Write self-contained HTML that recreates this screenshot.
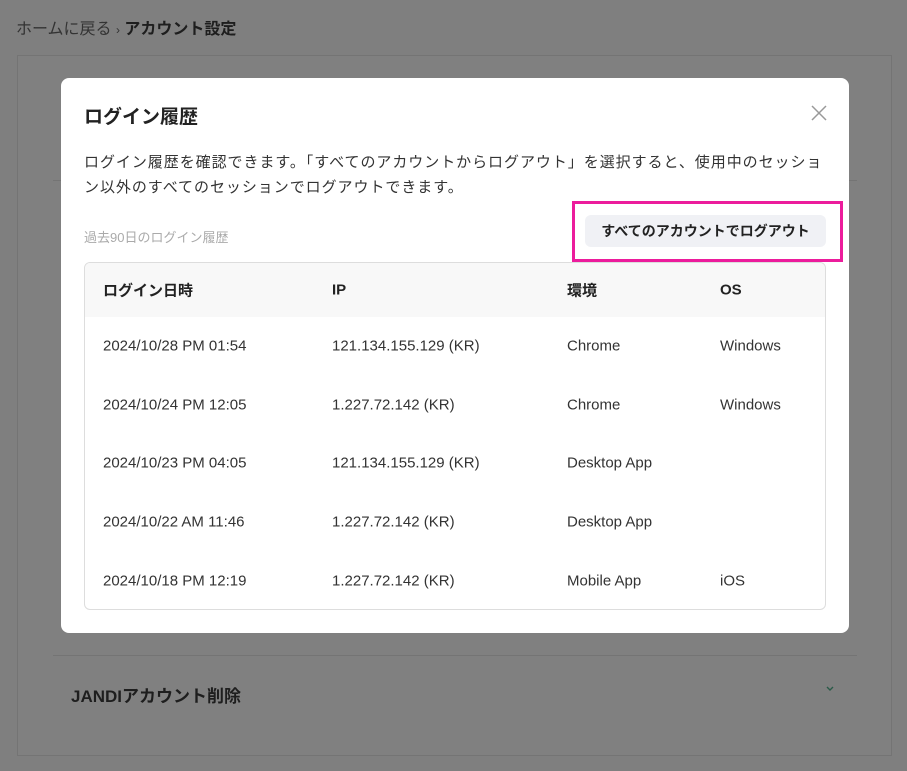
<!DOCTYPE html>
<html><head><meta charset="utf-8"><style>
*{margin:0;padding:0;box-sizing:border-box}
body{width:907px;height:771px;background:#7f7f7f;font-family:"Liberation Sans","Noto Sans CJK JP",sans-serif;position:relative;overflow:hidden;color:#222}
.bc{position:absolute;left:16px;top:15px;font-size:16px;color:#333}
.bc b{color:#1e1e1e}
.panel{position:absolute;left:17px;top:55px;width:875px;height:701px;border:1px solid #747474;background:#808080}
.sep{position:absolute;left:53px;width:804px;height:1px;background:#747474}
.del{position:absolute;left:71px;top:682px;font-size:17px;font-weight:bold;color:#1e1e1e}
.chev{position:absolute;left:826px;top:686px}
.modal{position:absolute;left:61px;top:78px;width:788px;height:555px;background:#fff;border-radius:8px}
.title{position:absolute;left:23px;top:24px;font-size:19px;font-weight:bold;color:#222}
.close{position:absolute;left:750px;top:27px}
.desc{position:absolute;left:23px;top:72px;width:760px;font-size:15px;line-height:25px;color:#333;letter-spacing:0.95px}
.sub{position:absolute;left:23px;top:149px;font-size:13px;color:#aaa}
.hl{position:absolute;left:511px;top:123px;width:271px;height:61px;border:3px solid #ec1c9c}
.btn{position:absolute;left:524px;top:137px;width:241px;height:32px;background:#f0f1f5;border-radius:6px;font-size:14px;font-weight:bold;text-align:center;line-height:32px;color:#222}
.tbl{position:absolute;left:23px;top:184px;width:742px;height:348px;border:1px solid #ddd;border-radius:6px;overflow:hidden}
.hd{height:54px;background:#f8f8f8;position:relative;font-weight:bold;font-size:15px}
.row{height:58.6px;position:relative;font-size:15px;color:#333}
.c{position:absolute;top:50%;transform:translateY(-50%);white-space:nowrap}
.c1{left:18px}.c2{left:247px}.c3{left:482px}.c4{left:635px}
</style></head><body>
<div class="bc">ホームに戻る <span style="font-size:12px">›</span> <b>アカウント設定</b></div>
<div class="panel"></div>
<div class="sep" style="top:180px"></div>
<div class="sep" style="top:655px"></div>
<div class="del">JANDIアカウント削除</div>
<svg class="chev" width="8" height="6" viewBox="0 0 8 6"><path d="M1 1L4 4L7 1" stroke="#2a5a48" stroke-width="1.4" fill="none"/></svg>
<div class="modal">
<div class="title">ログイン履歴</div>
<svg class="close" width="16" height="16" viewBox="0 0 16 16"><path d="M1 1L15 15M15 1L1 15" stroke="#999" stroke-width="1.5"/></svg>
<div class="desc">ログイン履歴を確認できます。「すべてのアカウントからログアウト」を選択すると、使用中のセッショ<br>ン以外のすべてのセッションでログアウトできます。</div>
<div class="sub">過去90日のログイン履歴</div>
<div class="hl"></div>
<div class="btn">すべてのアカウントでログアウト</div>
<div class="tbl">
<div class="hd"><span class="c c1">ログイン日時</span><span class="c c2">IP</span><span class="c c3">環境</span><span class="c c4">OS</span></div>
<div class="row"><span class="c c1">2024/10/28 PM 01:54</span><span class="c c2">121.134.155.129 (KR)</span><span class="c c3">Chrome</span><span class="c c4">Windows</span></div>
<div class="row"><span class="c c1">2024/10/24 PM 12:05</span><span class="c c2">1.227.72.142 (KR)</span><span class="c c3">Chrome</span><span class="c c4">Windows</span></div>
<div class="row"><span class="c c1">2024/10/23 PM 04:05</span><span class="c c2">121.134.155.129 (KR)</span><span class="c c3">Desktop App</span></div>
<div class="row"><span class="c c1">2024/10/22 AM 11:46</span><span class="c c2">1.227.72.142 (KR)</span><span class="c c3">Desktop App</span></div>
<div class="row"><span class="c c1">2024/10/18 PM 12:19</span><span class="c c2">1.227.72.142 (KR)</span><span class="c c3">Mobile App</span><span class="c c4">iOS</span></div>
</div>
</div>
</body></html>
